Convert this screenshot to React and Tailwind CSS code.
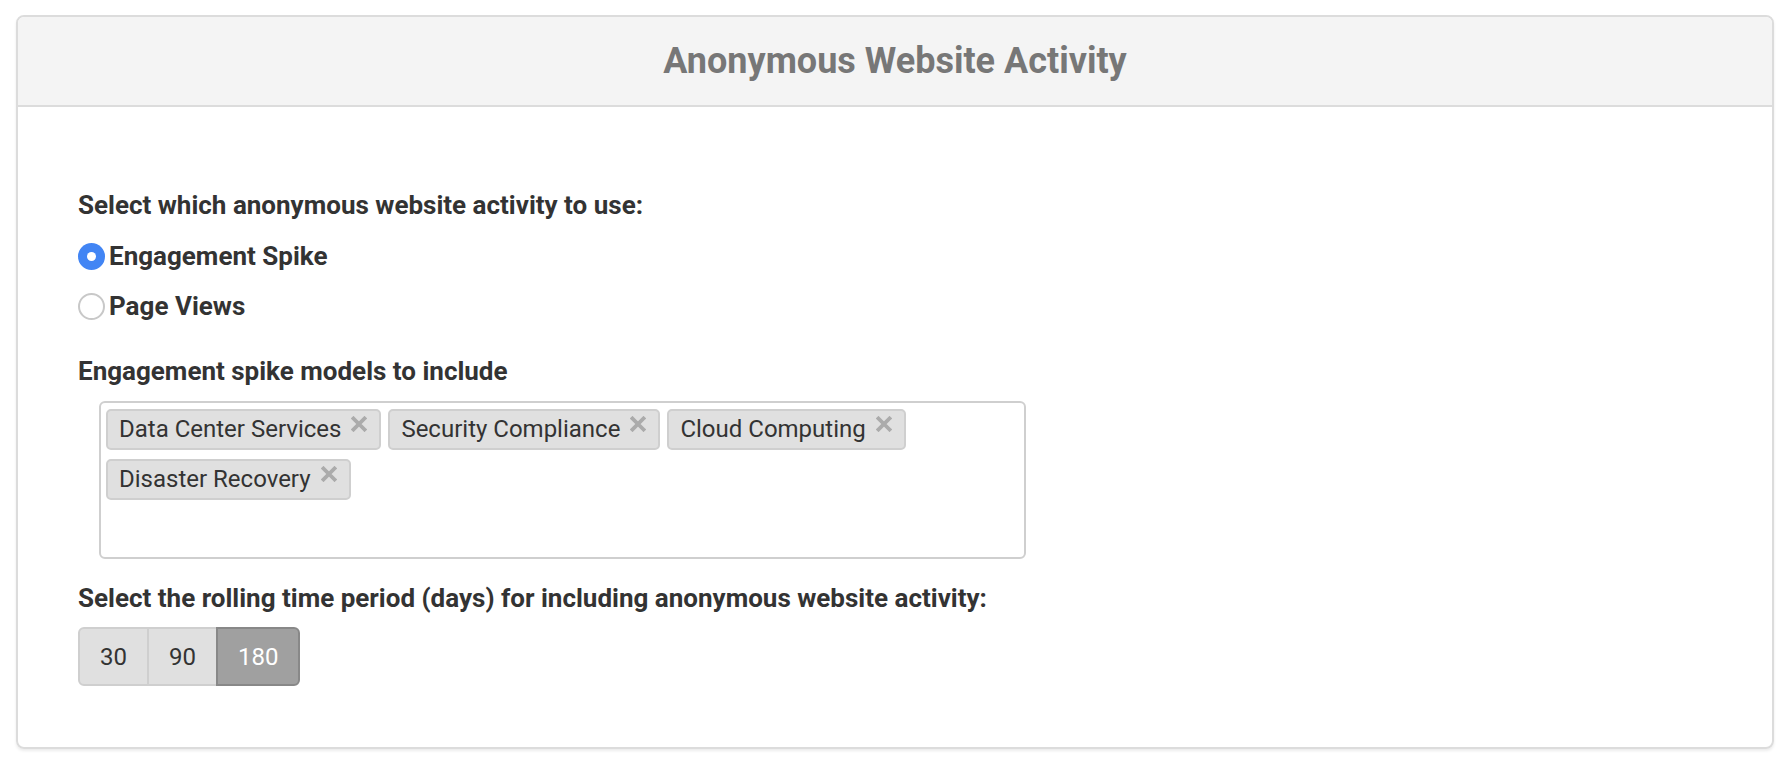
import React, { useState } from 'react';

const MODELS = ['Data Center Services', 'Security Compliance', 'Cloud Computing', 'Disaster Recovery'];
const PERIODS = [30, 90, 180];

const Radio = ({ checked, label, onClick }) => (
    <button type="button" onClick={onClick} className="flex items-center gap-[4px] h-[40px] text-left">
        {checked ? (
            <span className="w-[27px] h-[27px] rounded-full bg-[#4285f4] flex items-center justify-center shrink-0">
                <span className="w-[9px] h-[9px] rounded-full bg-white" />
            </span>
        ) : (
            <span className="w-[27px] h-[27px] rounded-full bg-white border-2 border-[#c8c8c8] shrink-0" />
        )}
        <span className="text-[26px] leading-[32px] font-bold text-[#333]">{label}</span>
    </button>
);

const Tag = ({ label }) => (
    <div className="flex items-start h-[41px] pl-[11px] pr-[12px] bg-[#e0e0e0] border-2 border-[#cfcfcf] rounded-[5px]">
        <span className="text-[24px] leading-[37px] text-[#333]">{label}</span>
        <svg width="16" height="16" viewBox="0 0 16 16" className="ml-[10px] mt-[5px] shrink-0">
            <path d="M2.5 2.5 L13.5 13.5 M13.5 2.5 L2.5 13.5" stroke="#ababab" strokeWidth="3.8" strokeLinecap="square" />
        </svg>
    </div>
);

export default function App() {
    const [activity, setActivity] = useState('spike');
    const [period, setPeriod] = useState(180);

    return (
        <div className="w-full min-h-screen bg-white pt-[15px] px-[16px] font-['Roboto',sans-serif]">
            <div className="border-2 border-[#dcdcdc] rounded-[8px] shadow-[0_2px_3px_rgba(0,0,0,0.08)] overflow-hidden">
                <div className="h-[90px] bg-[#f4f4f4] border-b-2 border-[#dcdcdc] flex items-center justify-center">
                    <h1 className="text-[36px] font-bold text-[#777] leading-none">Anonymous Website Activity</h1>
                </div>

                <div className="pt-[82px] pb-[61px] pl-[60px]">
                    <div className="text-[26px] leading-[32px] font-bold text-[#333]">
                        Select which anonymous website activity to use:
                    </div>
                    <div className="mt-[15px] flex flex-col gap-[10px] items-start">
                        <Radio checked={activity === 'spike'} label="Engagement Spike" onClick={() => setActivity('spike')} />
                        <Radio checked={activity === 'views'} label="Page Views" onClick={() => setActivity('views')} />
                    </div>

                    <div className="mt-[29px] text-[26px] leading-[32px] font-bold text-[#333]">
                        Engagement spike models to include
                    </div>
                    <div className="mt-[14px] ml-[21px] w-[927px] h-[158px] border-2 border-[#cfcfcf] rounded-[6px] pt-[6px] px-[5px] flex flex-wrap content-start gap-x-[7px] gap-y-[9px]">
                        {MODELS.map(m => <Tag key={m} label={m} />)}
                    </div>

                    <div className="mt-[23px] text-[26px] leading-[32px] font-bold text-[#333]">
                        Select the rolling time period (days) for including anonymous website activity:
                    </div>
                    <div className="mt-[13px] flex">
                        {PERIODS.map((p, idx) => {
                            const active = period === p;
                            return (
                                <button
                                    key={p}
                                    type="button"
                                    onClick={() => setPeriod(p)}
                                    className={`h-[59px] px-[20px] text-[24px] border-2 
                                        ${active ? 'bg-[#a0a0a0] border-[#888] text-white' : 'bg-[#e0e0e0] border-[#cfcfcf] text-[#333]'}
                                        ${idx === 0 ? 'rounded-l-[6px]' : '-ml-[2px]'}
                                        ${idx === PERIODS.length - 1 ? 'rounded-r-[6px]' : ''}
                                    `}
                                >
                                    {p}
                                </button>
                            );
                        })}
                    </div>
                </div>
            </div>
        </div>
    );
}
